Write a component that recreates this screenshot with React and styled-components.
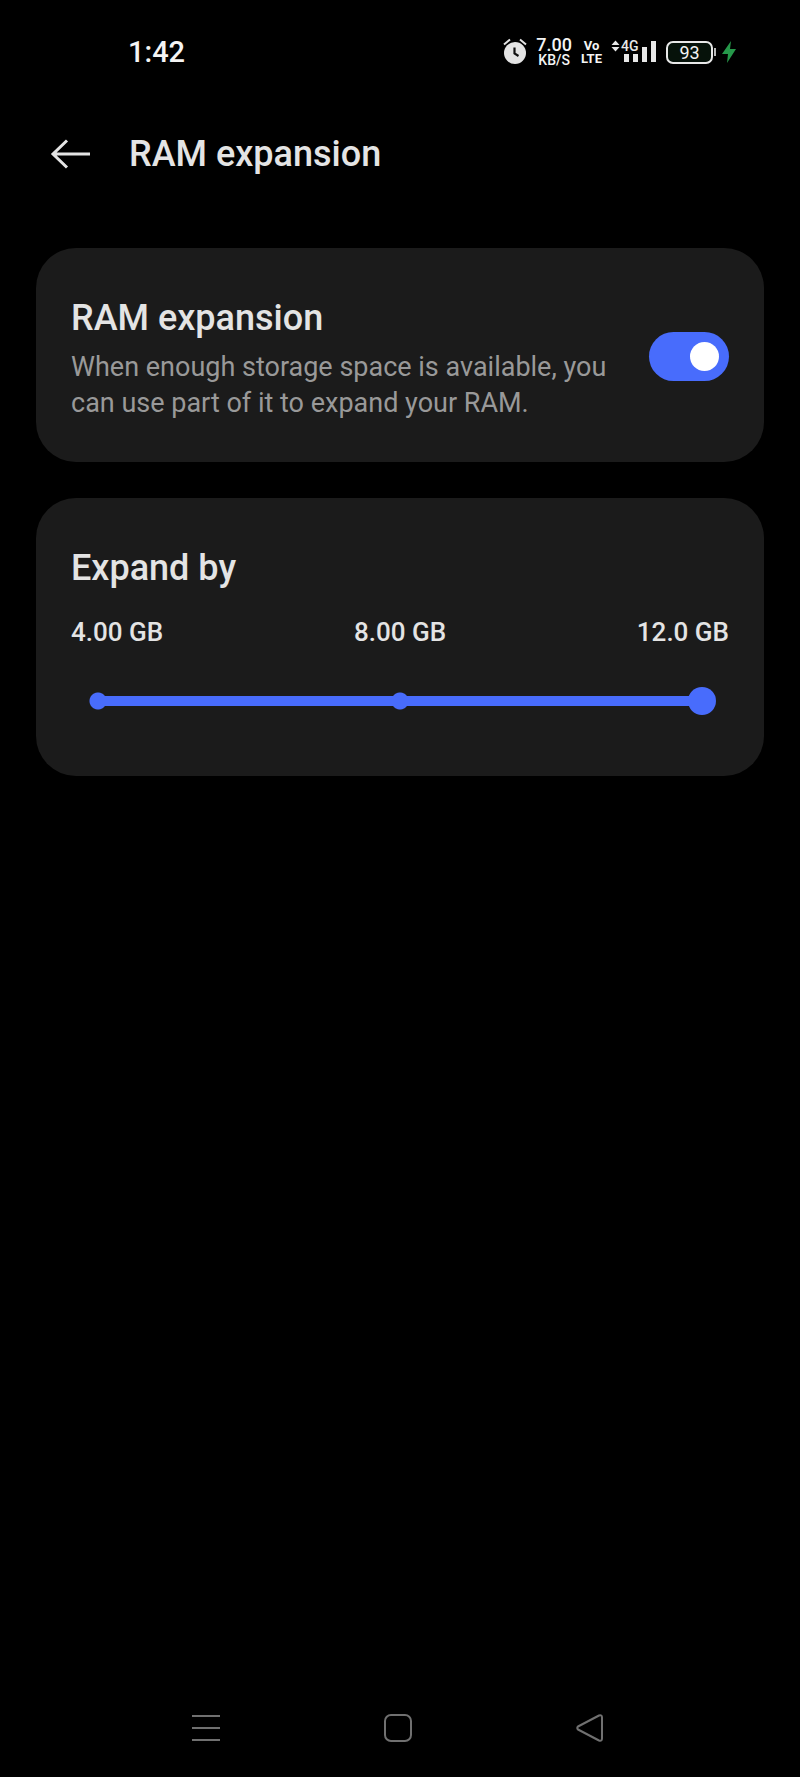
import React, { useState } from "react"
import styled, { createGlobalStyle } from "styled-components"

let blue = "#486cfc"

let GlobalStyle = createGlobalStyle`
    * {
        box-sizing: border-box;
    }
    body {
        margin: 0;
        background-color: #000;
        color: #e4e4e4;
        font-family: Roboto, "Liberation Sans", sans-serif;
    }
`
let Screen = styled.div`
    display: flex;
    flex-direction: column;
    min-height: 100vh;
`
let StatusBar = styled.div`
    display: flex;
    align-items: center;
    justify-content: space-between;
    height: 104px;
    padding: 0 64px 0 128px;
    color: #f4f4f4;
`
let Time = styled.time`
    font-size: 29px;
    font-weight: 500;
    line-height: 36px;
`
let StatusIcons = styled.div`
    display: flex;
    align-items: center;
    gap: 9px;
`
let Stack = styled.div`
    display: flex;
    flex-direction: column;
    align-items: center;
    font-weight: 500;
`
let Speed = styled.span`
    font-size: 18px;
    line-height: 16px;
`
let Unit = styled.span`
    font-size: 14px;
    line-height: 14px;
`
let Small = styled.span`
    font-size: 13px;
    font-weight: 700;
    line-height: 13px;
`
let Signal = styled.svg`
    display: block;
    font-size: 14px;
    font-weight: 500;
`
let Power = styled.div`
    display: flex;
    align-items: center;
`
let Battery = styled.div`
    width: 47px;
    height: 23px;
    border: 2px solid #e8e8e8;
    border-radius: 7px;
    background-color: #06120a;
    font-size: 18px;
    line-height: 19px;
    text-align: center;
`
let BatteryTip = styled.div`
    width: 2px;
    height: 8px;
    margin: 0 6px 0 1px;
    background-color: #b8b8b8;
`
let Header = styled.header`
    display: flex;
    align-items: center;
    height: 100px;
    padding: 0 36px;
    gap: 26px;
`
let BackButton = styled.button`
    display: flex;
    align-items: center;
    justify-content: center;
    width: 67px;
    height: 60px;
    padding: 0;
    border: 0;
    background: none;
    color: inherit;
`
let Title = styled.h1`
    margin: 0;
    font-size: 36px;
    font-weight: 500;
    line-height: 42px;
`
let Content = styled.main`
    display: flex;
    flex-direction: column;
    gap: 36px;
    padding: 44px 36px;
`
let Card = styled.section`
    padding: 43px 35px ${props => props.$bottom}px;
    border-radius: 40px;
    background-color: #1b1b1b;
`
let SwitchRow = styled.label`
    display: flex;
    align-items: center;
    justify-content: space-between;
    gap: 36px;
`
let CardTitle = styled.h2`
    display: block;
    margin: 0;
    padding-top: 6px;
    font-size: 36px;
    font-weight: 500;
    line-height: 42px;
`
let Description = styled.p`
    margin: 10px 0 0;
    color: #999;
    font-size: 27px;
    line-height: 36px;
`
let Switch = styled.input`
    appearance: none;
    display: flex;
    align-items: center;
    flex-shrink: 0;
    justify-content: ${props => props.checked ? "flex-end" : "flex-start"};
    width: 80px;
    height: 49px;
    margin: 0;
    padding: 10px;
    border-radius: 25px;
    background-color: ${props => props.checked ? blue : "#4a4a4a"};

    &:before {
        content: "";
        width: 29px;
        height: 29px;
        border-radius: 50%;
        background-color: #fff;
    }
`
let Sizes = styled.div`
    display: flex;
    justify-content: space-between;
    margin-top: 25px;
    font-size: 26px;
    font-weight: 500;
    line-height: 36px;
`
let dot = (x, on) => `radial-gradient(circle at ${x} 50%, ${on ? blue : "#4a4a4a"} 8px, transparent 9px)`

let Slider = styled.input`
    appearance: none;
    display: block;
    width: calc(100% - 26px);
    height: 28px;
    margin: 37px 13px 0;
    background:
        ${dot("14px", true)},
        ${props => dot("50%", props.value > 0)},
        ${props => dot("calc(100% - 14px)", props.value > 1)},
        linear-gradient(${blue}, ${blue}) 14px 50% / calc((100% - 28px) * ${props => props.value / 2}) 10px no-repeat,
        linear-gradient(#4a4a4a, #4a4a4a) 50% 50% / calc(100% - 28px) 10px no-repeat;

    &::-webkit-slider-thumb {
        appearance: none;
        width: 28px;
        height: 28px;
        border-radius: 50%;
        background-color: ${blue};
    }
`
let NavBar = styled.nav`
    display: flex;
    justify-content: center;
    margin-top: auto;
    padding-right: 4px;
`
let NavButton = styled.button`
    display: flex;
    align-items: center;
    justify-content: center;
    width: 192px;
    height: 98px;
    padding: 0;
    border: 0;
    background: none;
    color: #707070;
`
let Icon = ({ children }) => (
    <svg width="28" height="28" viewBox="0 0 28 28" fill="none" stroke="currentColor" strokeWidth="2" strokeLinejoin="round">
        {children}
    </svg>
)

let AlarmIcon = () => (
    <svg width="24" height="28" viewBox="0 0 24 28">
        <circle cx="12" cy="15" r="11" fill="#e4e4e4" />
        <path d="M1 6.500L7 1.500M23 6.500L17 1.500" stroke="#e4e4e4" strokeWidth="2" fill="none" />
        <path d="M11.500 9.500V15.500L15.500 18" stroke="#111" strokeWidth="2.200" fill="none" />
    </svg>
)

let SignalIcon = () => (
    <Signal width="46" height="30" viewBox="0 -4 46 30" fill="#e8e8e8">
        <path d="M0.500 4L4.500 -0.500L8.500 4ZM0.500 6L4.500 10.500L8.500 6Z" />
        <text x="10" y="10">4G</text>
        <path d="M13 13h5v8h-5zM22 13h5v8h-5zM31 6h5v15h-5zM40 0h5v21h-5z" />
    </Signal>
)

let sizes = ["4.00 GB", "8.00 GB", "12.0 GB"]

export default () => {
    let [enabled, setEnabled] = useState(true)
    let [step, setStep] = useState(2)

    return (
        <Screen>
            <GlobalStyle />
            <StatusBar>
                <Time>1:42</Time>
                <StatusIcons>
                    <AlarmIcon />
                    <Stack>
                        <Speed>7.00</Speed>
                        <Unit>KB/S</Unit>
                    </Stack>
                    <Stack>
                        <Small>Vo</Small>
                        <Small>LTE</Small>
                    </Stack>
                    <SignalIcon />
                    <Power>
                        <Battery>93</Battery>
                        <BatteryTip />
                        <svg width="14" height="24" viewBox="0 0 14 24">
                            <path d="M9 1L0 14H6L5 23L14 9H8Z" fill="#26984a" />
                        </svg>
                    </Power>
                </StatusIcons>
            </StatusBar>
            <Header>
                <BackButton aria-label="Back">
                    <svg width="40" height="30" viewBox="0 0 40 30" fill="none" stroke="currentColor" strokeWidth="3">
                        <path d="M40 15H3M17 1.500L3 15L17 28.500" />
                    </svg>
                </BackButton>
                <Title>RAM expansion</Title>
            </Header>
            <Content>
                <Card $bottom={41}>
                    <SwitchRow>
                        <div>
                            <CardTitle>RAM expansion</CardTitle>
                            <Description>When enough storage space is available, you can use part of it to expand your RAM.</Description>
                        </div>
                        <Switch type="checkbox" role="switch" checked={enabled} onChange={e => setEnabled(e.target.checked)} />
                    </SwitchRow>
                </Card>
                <Card $bottom={61}>
                    <CardTitle as="label" htmlFor="expand">Expand by</CardTitle>
                    <Sizes>
                        { sizes.map(size => <span key={size}>{size}</span>) }
                    </Sizes>
                    <Slider id="expand" type="range" min="0" max="2" value={step} onChange={e => setStep(Number(e.target.value))} />
                </Card>
            </Content>
            <NavBar>
                <NavButton aria-label="Recent apps">
                    <Icon><path d="M0 2H28M0 14H28M0 26H28" /></Icon>
                </NavButton>
                <NavButton aria-label="Home">
                    <Icon><rect x="1" y="1" width="26" height="26" rx="6" /></Icon>
                </NavButton>
                <NavButton aria-label="Back">
                    <Icon><path d="M2 12.500L23 1.500Q26 0.500 26 3.500V24.500Q26 27.500 23 26.500L2 15.500Q0.500 14 2 12.500Z" /></Icon>
                </NavButton>
            </NavBar>
        </Screen>
    )
}
